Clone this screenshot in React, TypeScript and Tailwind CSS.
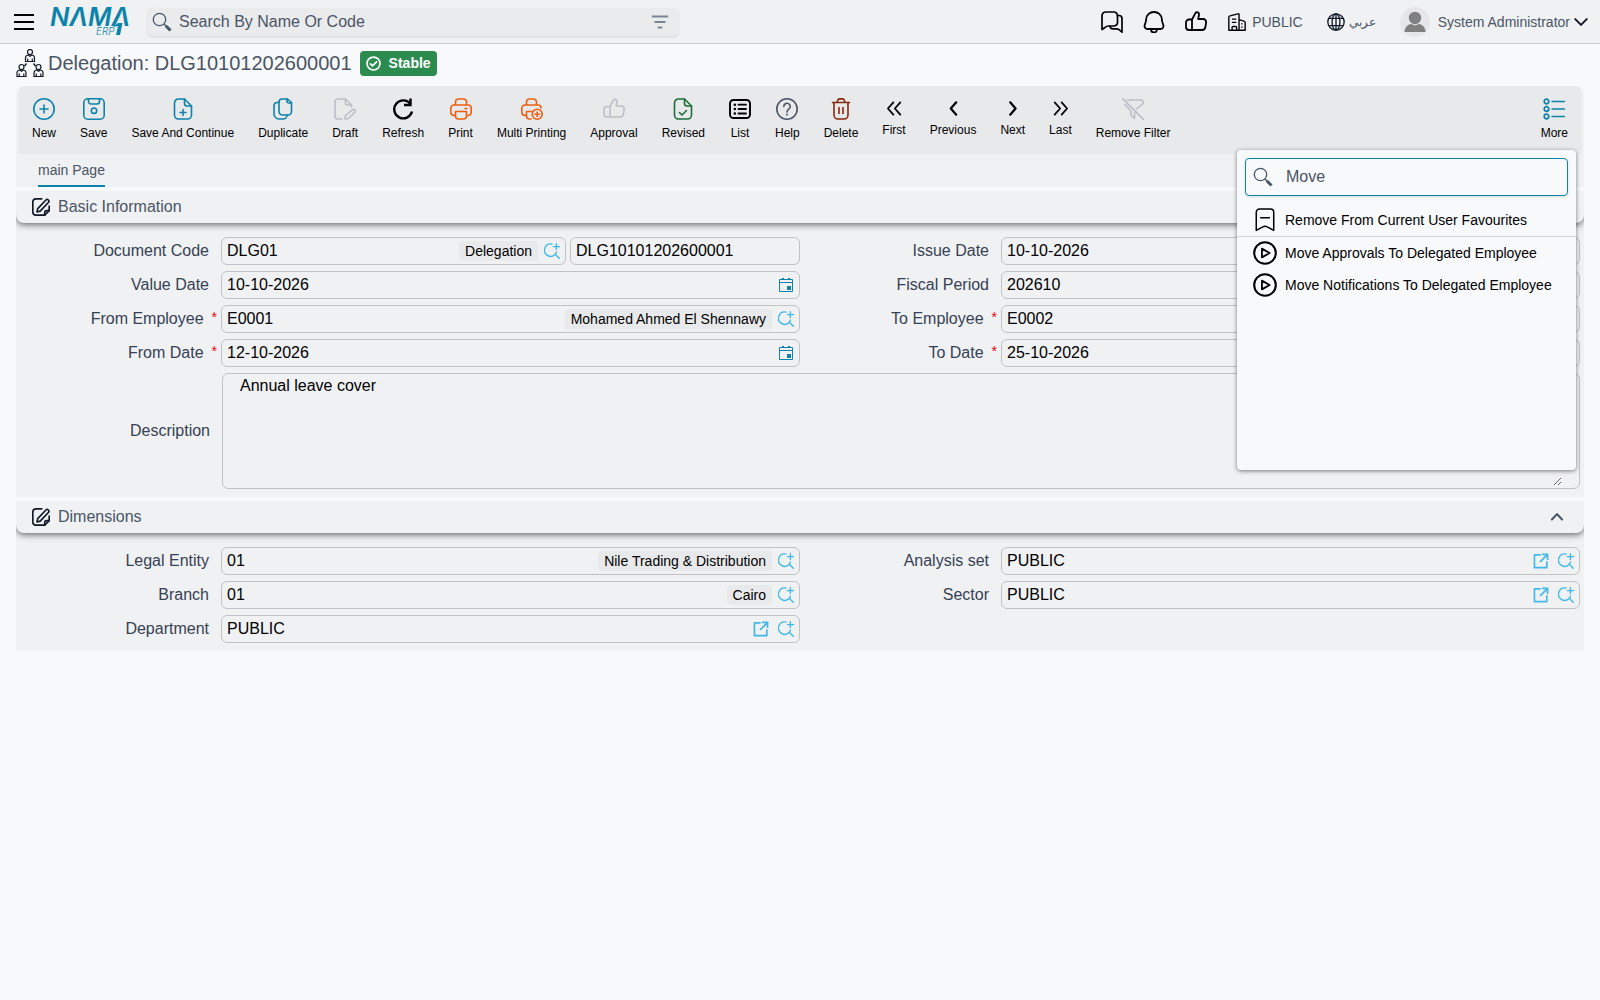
import { useState, type ReactNode } from 'react';
import clsx from 'clsx';

interface IconProps {
  className?: string;
  children?: ReactNode;
}

// base for all the outline icons, drawn on a 22px grid
const Icon = ({ className = 'size-[22px]', children }: IconProps) => (
  <svg
    viewBox="0 0 22 22"
    className={clsx('shrink-0', className)}
    fill="none"
    stroke="currentColor"
    strokeWidth="1.6"
    strokeLinecap="round"
    strokeLinejoin="round"
    aria-hidden="true"
  >
    {children}
  </svg>
);

const FileShape = () => (
  <>
    <path d="M12.5 1H6.5A4 4 0 0 0 2.5 5v12a4 4 0 0 0 4 4h9a4 4 0 0 0 4-4V8z" />
    <path d="M12.5 1v4.5A2.5 2.5 0 0 0 15 8h4.5" />
  </>
);

const Thumb = () => (
  <>
    <path d="M7 8.5H4a3 3 0 0 0-3 3V16a3 3 0 0 0 3 3h13a3.5 3.5 0 0 0 3.4-3l.7-4.4A3 3 0 0 0 18 8h-4.8l.8-4.4a2 2 0 0 0-3.6-1.5L7 8.5z" />
    <path d="M7 8.5V19" />
  </>
);

const SearchIcon = () => (
  <svg viewBox="0 0 20 20" className="size-5 shrink-0 text-gray-600" fill="none" stroke="currentColor" aria-hidden="true">
    <circle cx="7.5" cy="7.5" r="6.2" strokeWidth="1.3" />
    <path d="M12 12l2.5 2.5" strokeWidth="1.5" />
    <path d="M14 14l4.5 4.5" strokeWidth="3" />
  </svg>
);

const LookupIcon = () => (
  <Icon className="size-4">
    <path d="M11 1.5A8.5 8.5 0 1 0 15.5 15.5L21 21M15.5 15.5l1.5-3" strokeWidth="1.9" />
    <path d="M17 1v8M13 5h8.5" strokeWidth="1.9" />
  </Icon>
);

const OpenIcon = () => (
  <Icon className="size-4">
    <path d="M9.5 2.5H2V20h17v-7.5M13.5 2H20v6.5M20 2l-9.5 9.5" strokeWidth="2.3" strokeLinecap="square" />
  </Icon>
);

const CalendarIcon = () => (
  <svg viewBox="0 0 16 16" className="size-4 shrink-0 text-[#0d83ab]" fill="none" stroke="currentColor" aria-hidden="true">
    <path d="M1.5 2.5h13v12h-13zM1.5 5.5h13" />
    <path d="M4 1h2v2H4zM10 1h2v2h-2zM9 9h4v4H9z" fill="currentColor" stroke="none" />
  </svg>
);

const EditIcon = () => (
  <Icon className="size-[18px] text-gray-900">
    <path d="M12 1H5a4 4 0 0 0-4 4v12a4 4 0 0 0 4 4h10.500l5.500-5.500V10" strokeWidth="2" />
    <path d="M15.500 21v-3a2.500 2.500 0 0 1 2.500-2.500h3M17 2.500a2 2 0 0 1 3 3L10 16l-4 1 1-4z" strokeWidth="2" />
  </Icon>
);

const Logo = () => (
  <a href="#home" aria-label="NAMA ERP" className="shrink-0">
    <svg viewBox="0 0 80 29" className="h-[29px] w-20 overflow-visible text-[#0d83ab]" fill="currentColor" aria-hidden="true">
      <text x="0" y="19" fontFamily="Inter, sans-serif" fontSize="25.500" fontWeight="600" fontStyle="italic">NΛMΛ</text>
      <text x="46" y="28" fontFamily="Inter, sans-serif" fontSize="10" fontWeight="300" fontStyle="italic">ERP</text>
      <path d="M63 20l5-4h4.500l-2.500 12h-4l2-9z" />
    </svg>
  </a>
);

interface Action {
  label: string;
  icon: ReactNode;
  color?: string;
  disabled?: boolean;
  small?: boolean;
}

const actions: Action[] = [
  { label: 'New', color: 'text-[#0d83ab]', icon: <><circle cx="11" cy="11" r="10.2" /><path d="M11 7v8M7 11h8" /></> },
  {
    label: 'Save',
    color: 'text-[#0d83ab]',
    icon: <><rect x=".8" y=".8" width="20.4" height="20.4" rx="4" /><path d="M5.500 1v2.500a2.500 2.500 0 0 0 2.500 2.500h6a2.500 2.500 0 0 0 2.500-2.500V1" /><circle cx="11" cy="12.700" r="2.700" /></>
  },
  { label: 'Save And Continue', color: 'text-[#0d83ab]', icon: <><FileShape /><path d="M11 11.500v6M8 14.500h6" /></> },
  {
    label: 'Duplicate',
    color: 'text-[#0d83ab]',
    icon: <><path d="M15.500 1h-5.500a3 3 0 0 0-3 3v9.500a3.500 3.500 0 0 0 3.500 3.500h5.500a3.500 3.500 0 0 0 3.500-3.500V4.500z" /><path d="M15 1v2a2 2 0 0 0 2 2h2.500M7 4.500H5A3 3 0 0 0 2 7.500V16a5 5 0 0 0 5 5h4a4 4 0 0 0 4-4" /></>
  },
  {
    label: 'Draft',
    disabled: true,
    icon: <><path d="M8 21H4a3 3 0 0 1-3-3V4a3 3 0 0 1 3-3h7.500l6 6v2" /><path d="M11.500 1v4.500A1.500 1.500 0 0 0 13 7h4.500M18 12.200a1.600 1.600 0 0 1 3 1.800l-6.500 6.500-3.500.5.500-3.500z" /></>
  },
  { label: 'Refresh', icon: <><path d="M18.500 6A9 9 0 1 0 20 13.500" strokeWidth="2.400" strokeLinecap="butt" /><path d="M18.500.500v6.500H12" strokeWidth="2.400" strokeLinecap="butt" strokeLinejoin="miter" /></> },
  {
    label: 'Print',
    color: 'text-[#ef5f10]',
    icon: <><path d="M5.500 7V4a3 3 0 0 1 3-3h5a3 3 0 0 1 3 3v3M5 17.500H4a3.200 3.200 0 0 1-3.200-3.200v-4A3.200 3.200 0 0 1 4 7h14a3.200 3.200 0 0 1 3.200 3.200v4a3.200 3.200 0 0 1-3.200 3.300h-1" /><path d="M5.500 13.500h11V18a3 3 0 0 1-3 3h-5a3 3 0 0 1-3-3zM15 10.500h2" /></>
  },
  {
    label: 'Multi Printing',
    color: 'text-[#ef5f10]',
    icon: <><path d="M5.500 7V4a3 3 0 0 1 3-3h4a3 3 0 0 1 3 3v3M5 17.500H4a3.200 3.200 0 0 1-3.200-3.200v-4A3.200 3.200 0 0 1 4 7h13a3 3 0 0 1 3 3" /><path d="M10 21H8.500a3 3 0 0 1-3-3v-4.500H11" /><circle cx="16.200" cy="16.200" r="5" /><path d="M16.200 14v4.400M14 16.200h4.400" /></>
  },
  { label: 'Approval', disabled: true, icon: <Thumb /> },
  { label: 'Revised', color: 'text-[#1c6e3a]', icon: <><FileShape /><path d="M7.500 14.500l2.500 2.500 4.500-4.500" /></> },
  {
    label: 'List',
    icon: <><rect x="1" y="2" width="20" height="18" rx="3.500" strokeWidth="1.900" /><path d="M9.500 6.700h7.500M9.500 11h7.500M9.500 15.500h7.500" strokeWidth="1.800" /><path d="M5.800 6.700h.1M5.800 11h.1M5.800 15.500h.1" strokeWidth="2.500" /></>
  },
  { label: 'Help', color: 'text-gray-600', icon: <><circle cx="11" cy="11" r="10.200" /><path d="M7.800 8.500a3.200 3.200 0 1 1 5 2.600c-1.100.8-1.800 1.300-1.800 2.900" /><path d="M11 16.500v.2" strokeWidth="1.800" /></> },
  {
    label: 'Delete',
    color: 'text-[#86290e]',
    icon: <path d="M2.500 4.500h17M4 4.500V17a4 4 0 0 0 4 4h6a4 4 0 0 0 4-4V4.500M7 4.500l.7-2.200A2 2 0 0 1 9.500.9h3a2 2 0 0 1 1.800 1.400L15 4.500M9 9.500v6M13 9.500v6" />
  },
  { label: 'First', small: true, icon: <path d="M9.500 3l-7 8 7 8M18.500 3l-7 8 7 8" strokeWidth="2.300" /> },
  { label: 'Previous', small: true, icon: <path d="M14.500 3L7.500 11l7 8" strokeWidth="2.900" /> },
  { label: 'Next', small: true, icon: <path d="M8 3l7 8-7 8" strokeWidth="2.900" /> },
  { label: 'Last', small: true, icon: <path d="M3.500 3l7 8-7 8M12.500 3l7 8-7 8" strokeWidth="2.300" /> },
  { label: 'Remove Filter', disabled: true, icon: <path d="M.5.5l21 21M5 2h13a2.500 2.500 0 0 1 2 4.500L14.500 11M3 6.500l6 6.500v4.500l3.500 3V15" /> }
];

const ToolbarButton = ({ label, icon, color = 'text-black', disabled, small }: Action) => (
  <button type="button" disabled={disabled} className="flex shrink-0 flex-col items-center px-3 text-xs leading-4 text-black">
    <span className={disabled ? 'text-[#bcbec6]' : color}>
      {small ? <Icon className="mt-0.5 size-[17px]">{icon}</Icon> : <Icon>{icon}</Icon>}
    </span>
    <span className="mt-[5px] whitespace-nowrap">{label}</span>
  </button>
);

const menuItems = [
  { label: 'Remove From Current User Favourites', bookmark: true },
  { label: 'Move Approvals To Delegated Employee' },
  { label: 'Move Notifications To Delegated Employee' }
];

const MoreMenu = () => {
  const [query, setQuery] = useState('Move');

  return (
    <div className="absolute top-[52px] right-1 z-10 h-80 w-[339px] rounded bg-[#f8f9fb] pt-2 shadow-[0_1px_4px_rgba(0,0,0,0.5)]">
      <label className="mx-2 flex h-[38px] items-center rounded border border-[#0d83ab] pl-[7px] shadow-sm">
        <SearchIcon />
        <input
          type="text"
          aria-label="Search actions"
          value={query}
          onChange={(e) => setQuery(e.target.value)}
          className="ml-[13px] min-w-0 flex-1 bg-transparent text-base text-gray-600 outline-none"
        />
      </label>
      <ul className="mt-2">
        {menuItems.map((item) => (
          <li key={item.label} className={clsx(item.bookmark && 'border-b border-[#d3d5d8]')}>
            <button type="button" className="flex h-8 w-full items-center gap-2 pl-4 text-left text-sm text-black">
              <Icon className="size-6">
                {item.bookmark ? (
                  <path d="M3 20.500V4a3 3 0 0 1 3-3h10a3 3 0 0 1 3 3v16.500l-6-3.200a4 4 0 0 0-4 0zM7 9h8" strokeWidth="1.400" />
                ) : (
                  <><circle cx="11" cy="11" r="9.900" strokeWidth="1.900" /><path d="M8.200 7v8l7-4z" strokeWidth="1.700" /></>
                )}
              </Icon>
              {item.label}
            </button>
          </li>
        ))}
      </ul>
    </div>
  );
};

interface FieldProps {
  label: string;
  value: string;
  required?: boolean;
  tag?: string;
  open?: boolean;
  type?: 'date' | 'lookup' | 'text';
  number?: string;
}

const boxClass = 'flex h-7 min-w-0 items-center rounded-md border border-[#c0c2c5] px-[5px]';
const inputClass = 'min-w-0 flex-1 bg-transparent text-base leading-6 text-black outline-none';

const Field = ({ label, value, required, tag, open, type = 'text', number }: FieldProps) => {
  const id = label.toLowerCase().replace(/ /g, '-');

  return (
    <div className="flex items-center">
      <label htmlFor={id} className={clsx('flex w-[201px] shrink-0 justify-end gap-2 text-base leading-6 text-gray-700', required ? 'pr-1' : 'pr-3')}>
        {label}
        {required && <span className="text-sm text-red-600">*</span>}
      </label>
      <div className={clsx('grid min-w-0 flex-1 gap-1', number && 'grid-cols-[3fr_2fr]')}>
        <div className={boxClass}>
          <input id={id} type="text" defaultValue={value} className={inputClass} />
          <div className="flex items-center gap-1.5 text-[#41b9e6]">
            {tag && <span className="rounded bg-[#e8e9eb] px-1.5 text-sm leading-5 whitespace-nowrap text-black">{tag}</span>}
            {open && <a href="#open" aria-label={`Open ${label}`} className="mr-[3px]"><OpenIcon /></a>}
            {type === 'lookup' && <button type="button" aria-label={`Find ${label}`}><LookupIcon /></button>}
            {type === 'date' && <button type="button" aria-label={`Pick ${label}`}><CalendarIcon /></button>}
          </div>
        </div>
        {number && (
          <div className={boxClass}>
            <input type="text" aria-label="Document Number" defaultValue={number} className={inputClass} />
          </div>
        )}
      </div>
    </div>
  );
};

const Section = ({ title, children }: { title: string; children: ReactNode }) => (
  <section className="mt-1 overflow-hidden bg-[#f0f1f3]">
    <div className="flex h-8 items-center gap-2 rounded-b-lg px-4 shadow-[0_2px_6px_rgba(0,0,0,0.55)]">
      <EditIcon />
      <h2 className="flex-1 text-base leading-6 text-gray-600">{title}</h2>
      <button type="button" aria-label={`Collapse ${title}`} className="mr-[3px] text-gray-600">
        <Icon className="size-4"><path d="M4 14.500L11 7l7 7.500" strokeWidth="2.800" /></Icon>
      </button>
    </div>
    <div className="px-1 pt-3.5 pb-2">{children}</div>
  </section>
);

const Header = () => (
  <header className="flex h-11 items-center border-b border-[#cdcfd2] bg-[#f0f1f3] pr-3 pl-3.5">
    <button type="button" aria-label="Menu" className="mr-4 flex flex-col gap-[5px]">
      <span className="h-0.5 w-5 bg-black" />
      <span className="h-0.5 w-5 bg-black" />
      <span className="h-0.5 w-5 bg-black" />
    </button>
    <Logo />
    <label className="ml-[18px] flex h-7 w-[530px] items-center rounded bg-[#eaebed] pr-2 pl-1 shadow-sm">
      <SearchIcon />
      <input type="text" aria-label="Search" placeholder="Search By Name Or Code" className="ml-[7px] min-w-0 flex-1 bg-transparent text-base text-gray-600 outline-none placeholder:text-gray-600" />
      <button type="button" aria-label="Filter" className="text-[#7a8594]">
        <Icon className="size-5"><path d="M2 5h18M5 11h12M8.500 17h5" strokeWidth="2.100" strokeLinecap="butt" /></Icon>
      </button>
    </label>
    <div className="ml-auto flex items-center text-sm text-gray-600">
      <button type="button" aria-label="Messages" className="mr-5 text-black">
        <Icon>
          <path d="M4.500 1h8.500a3.500 3.500 0 0 1 3.500 3.500v7a3.500 3.500 0 0 1-3.500 3.500H7.500a5 5 0 0 0-3.500 1.500L1 18.500V4.500A3.500 3.500 0 0 1 4.500 1z" strokeWidth="1.700" />
          <path d="M16.500 4.500H18a3 3 0 0 1 3 3v13.700l-3-2.500a4 4 0 0 0-2.500-.9H12a3 3 0 0 1-3-2.500" strokeWidth="1.700" />
        </Icon>
      </button>
      <button type="button" aria-label="Notifications" className="mr-5 text-black">
        <Icon>
          <path d="M4.500 18A3 3 0 0 1 1.700 14c1-2 1.300-3.500 1.500-6A7.600 7.600 0 0 1 11 1a7.600 7.600 0 0 1 7.800 7c.2 2.500.5 4 1.500 6a3 3 0 0 1-2.800 4zM8 18.500a3 3 0 0 0 6 0" strokeWidth="1.800" />
        </Icon>
      </button>
      <button type="button" aria-label="Approvals" className="mr-[21px] text-black"><Icon><g strokeWidth="1.800"><Thumb /></g></Icon></button>
      <a href="#company" className="mr-6 flex items-center gap-1.5">
        <Icon className="size-[18px] text-black">
          <path d="M1 21V5.500a2 2 0 0 1 1.500-1.900L12 1a1 1 0 0 1 1.500 1V21M13.500 8l6 2a2 2 0 0 1 1.500 2v9H1M5 21v-3.500a1 1 0 0 1 1-1h3.500a1 1 0 0 1 1 1V21M5.500 7.500h4M5.500 11.500h4M17 13v.3M17 17v.3" strokeWidth="1.700" />
        </Icon>
        PUBLIC
      </a>
      <a href="#language" lang="ar" className="mr-6 flex items-center gap-1 text-xs">
        <Icon className="size-[18px] text-gray-900">
          <g strokeWidth="1.600"><circle cx="11" cy="11" r="10" /><ellipse cx="11" cy="11" rx="4.800" ry="10" /><path d="M2.500 6.500h17M2.500 15.500h17M11 1v20" /></g>
        </Icon>
        عربي
      </a>
      <button type="button" className="flex items-center">
        <svg viewBox="0 0 30 30" className="mr-2 size-[30px]" aria-hidden="true">
          <circle cx="15" cy="15" r="15" fill="#e5e6e8" />
          <circle cx="15" cy="11" r="6.200" fill="#808080" />
          <path d="M4.500 25c0-5 3.500-7.500 6.500-8l4 1.500 4-1.500c3 .5 6.500 3 6.500 8z" fill="#808080" />
        </svg>
        System Administrator
        <Icon className="ml-1 size-3.5 text-gray-900"><path d="M2 6.500l9 9 9-9" strokeWidth="3" /></Icon>
      </button>
    </div>
  </header>
);

const DelegationIcon = () => (
  <svg viewBox="0 0 28 28" className="size-7 shrink-0" fill="none" stroke="#111827" strokeWidth="1.200" aria-hidden="true">
    {['translate(9 0)', 'translate(.5 15)', 'translate(17.5 15)'].map((place) => (
      <g key={place} transform={place}>
        <circle cx="5" cy="3" r="2.500" />
        <path d="M.5 12.500V9A3 3 0 0 1 3 6l2 1.200L7 6a3 3 0 0 1 2.500 3v3.500zM2.700 12.500v-3M7.300 12.500v-3" />
      </g>
    ))}
    <path d="M10.500 14.500l-2 2.500M17.500 14.500l2 2.500" strokeWidth="1.400" />
  </svg>
);

export default function App() {
  return (
    <div className="min-h-screen bg-[#f8f9fb] font-['Liberation_Sans',Arial,sans-serif]">
      <Header />

      <main className="px-4">
        <div className="flex h-[42px] items-center pb-1">
          <DelegationIcon />
          <h1 className="ml-1 text-xl leading-6 text-gray-600">Delegation: DLG10101202600001</h1>
          <span className="ml-2 flex h-[25px] items-center rounded bg-[#2c8c50] px-1.5 text-sm font-bold text-white">
            <Icon className="mr-2 size-[15px]"><circle cx="11" cy="11" r="9.500" strokeWidth="2.500" /><path d="M6.500 11.500l3 3 6-6" strokeWidth="2.500" /></Icon>
            Stable
          </span>
        </div>

        <div className="rounded-t-lg bg-[#f0f1f3] px-0.5">
          <div className="relative flex h-[68px] items-start rounded-t-lg bg-[#e8e9eb] px-0.5 pt-3">
            {actions.map((action) => (
              <ToolbarButton key={action.label} {...action} />
            ))}
            <div className="relative ml-auto">
              <ToolbarButton
                label="More"
                color="text-[#0d83ab]"
                icon={<><circle cx="3.500" cy="3.500" r="2.300" strokeWidth="1.700" /><circle cx="3.500" cy="11" r="2.300" strokeWidth="1.700" /><circle cx="3.500" cy="18.500" r="2.300" strokeWidth="1.700" /><path d="M9 3.500h12.500M9 11h12.500M9 18.500h12.500" strokeWidth="1.300" /></>}
              />
              <MoreMenu />
            </div>
          </div>
          <nav className="flex h-[33px] items-stretch pl-5">
            <a href="#main" className="border-b-2 border-[#0d83ab] pt-1.5 text-sm text-gray-600">main Page</a>
          </nav>
        </div>

        <Section title="Basic Information">
          <div className="grid grid-cols-2 gap-y-1.5">
            <Field label="Document Code" value="DLG01" tag="Delegation" type="lookup" number="DLG10101202600001" />
            <Field label="Issue Date" value="10-10-2026" type="date" />
            <Field label="Value Date" value="10-10-2026" type="date" />
            <Field label="Fiscal Period" value="202610" type="lookup" />
            <Field label="From Employee" value="E0001" tag="Mohamed Ahmed El Shennawy" type="lookup" required />
            <Field label="To Employee" value="E0002" type="lookup" required />
            <Field label="From Date" value="12-10-2026" type="date" required />
            <Field label="To Date" value="25-10-2026" type="date" required />
            <div className="col-span-2 flex items-center">
              <label htmlFor="description" className="w-[202px] shrink-0 pr-3 text-right text-base text-gray-700">Description</label>
              <div className="flex h-[116px] flex-1 rounded-md border border-[#c0c2c5] px-[17px] pb-0.5">
                <textarea id="description" defaultValue="Annual leave cover" className="h-full w-full bg-transparent text-base leading-6 text-black outline-none" />
              </div>
            </div>
          </div>
        </Section>

        <Section title="Dimensions">
          <div className="grid grid-cols-2 gap-y-1.5">
            <Field label="Legal Entity" value="01" tag="Nile Trading & Distribution" type="lookup" />
            <Field label="Analysis set" value="PUBLIC" open type="lookup" />
            <Field label="Branch" value="01" tag="Cairo" type="lookup" />
            <Field label="Sector" value="PUBLIC" open type="lookup" />
            <Field label="Department" value="PUBLIC" open type="lookup" />
          </div>
        </Section>
      </main>
    </div>
  );
}
